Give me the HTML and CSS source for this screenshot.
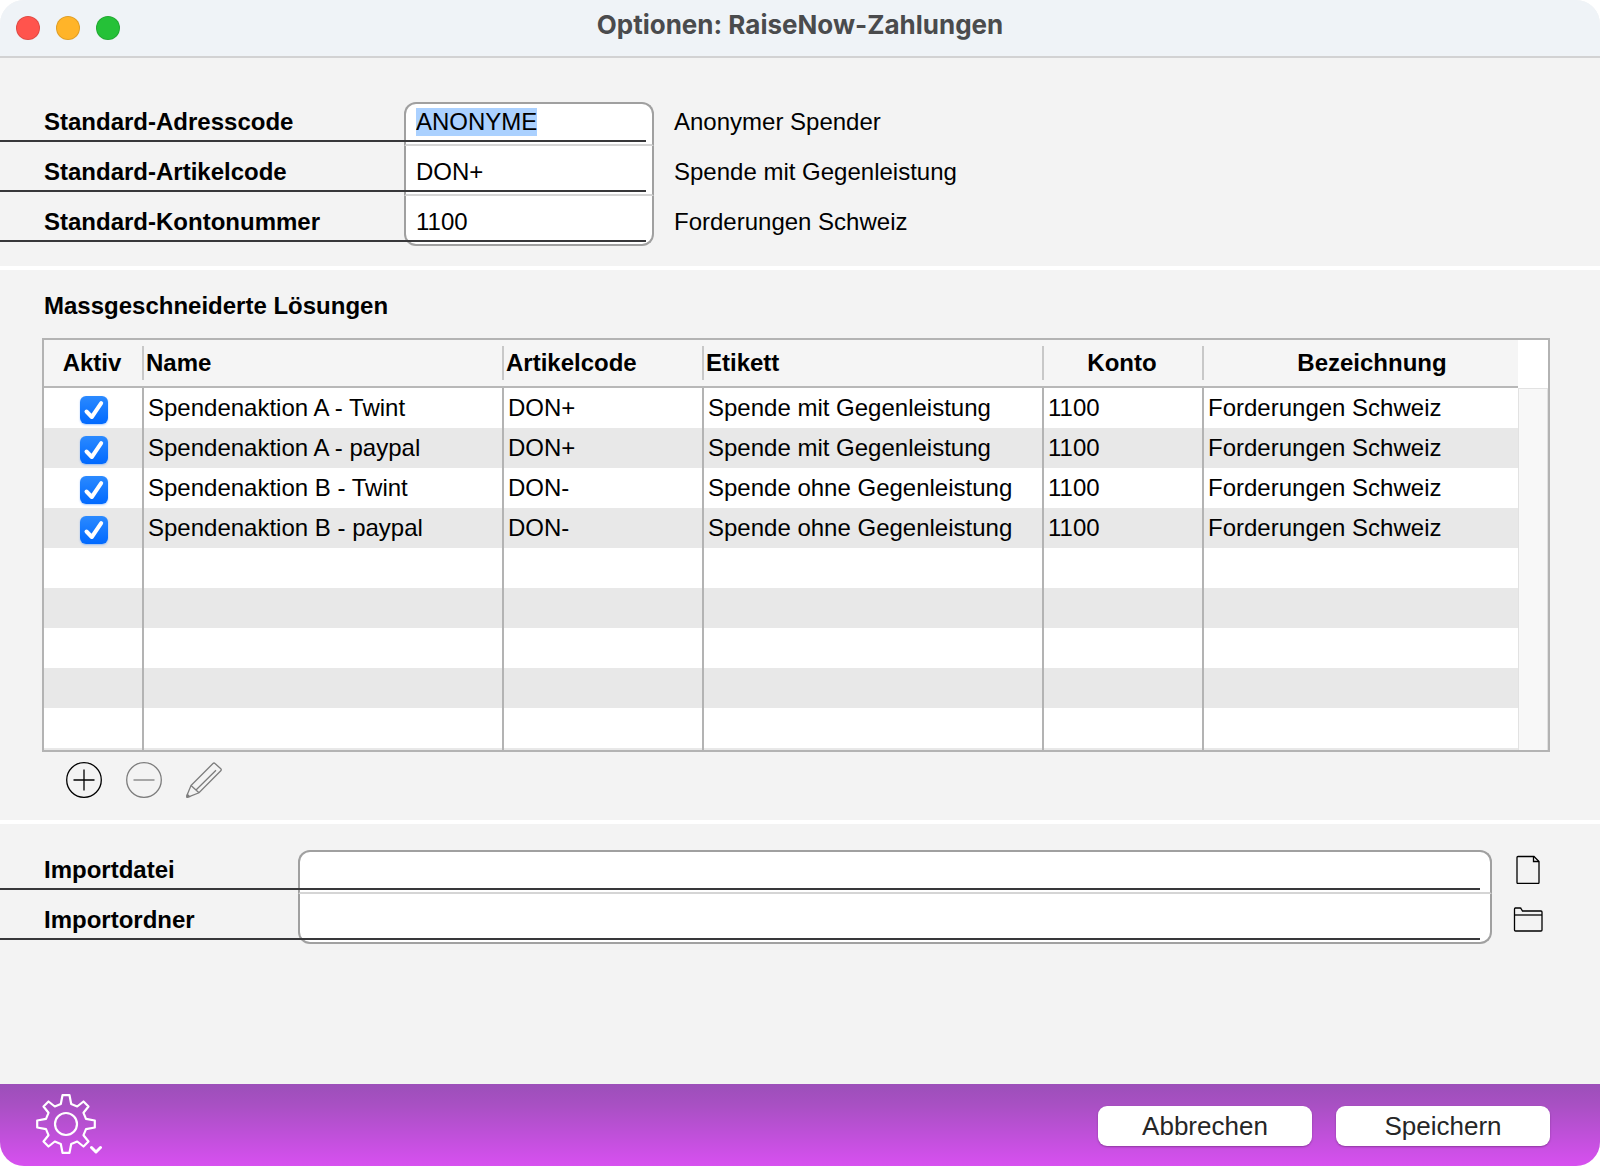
FILE: index.html
```html
<!DOCTYPE html>
<html lang="de">
<head>
  <meta charset="UTF-8">
  <title>Optionen: RaiseNow-Zahlungen</title>
  <link rel="stylesheet" href="styles.css">
</head>
<body>

  <div class="window">
    <header class="titlebar">
      <div class="lights">
        <button class="light close" aria-label="Schliessen"></button>
        <button class="light minimize" aria-label="Minimieren"></button>
        <button class="light maximize" aria-label="Maximieren"></button>
      </div>
      <h1>Optionen: RaiseNow-Zahlungen</h1>
    </header>

    <section class="defaults">
      <div class="row">
        <div class="field">
          <label for="adresscode">Standard-Adresscode</label>
          <input class="first" type="text" id="adresscode" value="ANONYME">
        </div>
        <span class="info">Anonymer Spender</span>
      </div>
      <div class="row">
        <div class="field">
          <label for="artikelcode">Standard-Artikelcode</label>
          <input type="text" id="artikelcode" value="DON+">
        </div>
        <span class="info">Spende mit Gegenleistung</span>
      </div>
      <div class="row">
        <div class="field">
          <label for="kontonummer">Standard-Kontonummer</label>
          <input class="last" type="text" id="kontonummer" value="1100">
        </div>
        <span class="info">Forderungen Schweiz</span>
      </div>
    </section>

    <section class="solutions">
      <h2>Massgeschneiderte Lösungen</h2>

      <div class="list">
        <table>
          <colgroup>
            <col class="col-active">
            <col class="col-name">
            <col class="col-article">
            <col class="col-label">
            <col class="col-account">
            <col>
          </colgroup>
          <thead>
            <tr>
              <th class="center">Aktiv</th>
              <th>Name</th>
              <th>Artikelcode</th>
              <th>Etikett</th>
              <th class="center">Konto</th>
              <th class="center">Bezeichnung</th>
            </tr>
          </thead>
          <tbody>
            <tr>
              <td class="active"><input type="checkbox" aria-label="Spendenaktion A - Twint aktiv" checked></td>
              <td>Spendenaktion A - Twint</td>
              <td>DON+</td>
              <td>Spende mit Gegenleistung</td>
              <td>1100</td>
              <td>Forderungen Schweiz</td>
            </tr>
            <tr>
              <td class="active"><input type="checkbox" aria-label="Spendenaktion A - paypal aktiv" checked></td>
              <td>Spendenaktion A - paypal</td>
              <td>DON+</td>
              <td>Spende mit Gegenleistung</td>
              <td>1100</td>
              <td>Forderungen Schweiz</td>
            </tr>
            <tr>
              <td class="active"><input type="checkbox" aria-label="Spendenaktion B - Twint aktiv" checked></td>
              <td>Spendenaktion B - Twint</td>
              <td>DON-</td>
              <td>Spende ohne Gegenleistung</td>
              <td>1100</td>
              <td>Forderungen Schweiz</td>
            </tr>
            <tr>
              <td class="active"><input type="checkbox" aria-label="Spendenaktion B - paypal aktiv" checked></td>
              <td>Spendenaktion B - paypal</td>
              <td>DON-</td>
              <td>Spende ohne Gegenleistung</td>
              <td>1100</td>
              <td>Forderungen Schweiz</td>
            </tr>
            <tr><td></td><td></td><td></td><td></td><td></td><td></td></tr>
            <tr><td></td><td></td><td></td><td></td><td></td><td></td></tr>
            <tr><td></td><td></td><td></td><td></td><td></td><td></td></tr>
            <tr><td></td><td></td><td></td><td></td><td></td><td></td></tr>
            <tr><td></td><td></td><td></td><td></td><td></td><td></td></tr>
            <tr class="cut"><td></td><td></td><td></td><td></td><td></td><td></td></tr>
          </tbody>
        </table>
        <div class="scrollbar"></div>
      </div>

      <div class="tools">
        <button class="icon-btn" aria-label="Hinzufügen">
          <svg width="36" height="36" viewBox="0 0 36 36">
            <circle cx="18" cy="18" r="17.3"/>
            <path d="M7.5 18h21M18 7.5v21"/>
          </svg>
        </button>
        <button class="icon-btn dim" aria-label="Entfernen">
          <svg width="36" height="36" viewBox="0 0 36 36">
            <circle cx="18" cy="18" r="17.3"/>
            <path d="M7.5 18h21"/>
          </svg>
        </button>
        <button class="icon-btn dim" aria-label="Bearbeiten">
          <svg width="36" height="36" viewBox="0 0 36 36">
            <path d="M5 23.5L27 1.5Q28 .5 29 1.5L34.8 6.7Q35.8 7.7 34.8 8.7L13 30.8L2 35.2Q.5 35.5.8 33.8Z"/>
            <path d="M5 23.5L13 30.8M10 28L30 8.3"/>
            <path d="M1.500 32.500L3.500 34.500L1 35Z" fill="currentColor"/>
          </svg>
        </button>
      </div>
    </section>

    <section class="import">
      <div class="row">
        <div class="field">
          <label for="importdatei">Importdatei</label>
          <input class="first" type="text" id="importdatei">
        </div>
        <button class="icon-btn" aria-label="Datei wählen">
          <svg width="30" height="30" viewBox="0 0 30 30">
            <path d="M5 2.500H21L26 7.500V28.500Q26 29.500 25 29.500H5Q4 29.500 4 28.500V3.500Q4 2.500 5 2.500Z"/>
            <path d="M20.500 2.500V7.500H26"/>
          </svg>
        </button>
      </div>
      <div class="row">
        <div class="field">
          <label for="importordner">Importordner</label>
          <input class="last" type="text" id="importordner">
        </div>
        <button class="icon-btn" aria-label="Ordner wählen">
          <svg width="30" height="30" viewBox="0 0 30 30">
            <path d="M2 4H7Q8 4 8.300 5L9.500 7H28Q29 7 29 8V26Q29 27 28 27H2.500Q1.500 27 1.500 26V5Q1.500 4 2.500 4Z"/>
            <path d="M1.500 11H29"/>
          </svg>
        </button>
      </div>
    </section>

    <footer class="footer">
      <button class="gear" aria-label="Einstellungen">
        <svg width="68" height="60" viewBox="0 0 68 60">
          <path d="M26.500 1.200H33.500L35.200 10L41.200 12.500L47.500 7.500L52.500 12.500L47.500 18.800L50 24.800L58.800 26.500V33.500L50 35.200L47.500 41.200L52.500 47.500L47.500 52.500L41.200 47.500L35.200 50L33.500 58.800H26.500L24.800 50L18.800 47.500L12.500 52.500L7.500 47.500L12.500 41.200L10 35.200L1.200 33.500V26.500L10 24.800L12.500 18.800L7.500 12.500L12.500 7.500L18.800 12.500L24.800 10Z"/>
          <circle cx="30" cy="30" r="11"/>
          <path class="chevron" d="M55.500 53.500L60 58L64.500 53.500"/>
        </svg>
      </button>
      <button class="btn">Abbrechen</button>
      <button class="btn">Speichern</button>
    </footer>
  </div>

  <script>
    const adresscode = document.getElementById('adresscode');
    adresscode.focus();
    adresscode.select();
  </script>

</body>
</html>
```
FILE: styles.css
```css
:root {
  --bg-color: #f3f3f3;
  --line-color: #b3b3b3;
  --field-border: #a0a0a0;
  --underline: #38383a;
}

* {
  box-sizing: border-box;
}

body {
  margin: 0;
  background: #fff;
  color: #000;
  font-family: "Liberation Sans", Arial, sans-serif;
  font-size: 24px;
  line-height: 28px;
}

button {
  padding: 0;
  border: 0;
  background: none;
  color: #000;
  font: inherit;
  cursor: pointer;
}

svg {
  display: block;
  fill: none;
  stroke: currentColor;
}

.window {
  display: flex;
  flex-direction: column;
  min-height: 100vh;
  background: var(--bg-color);
  border-radius: 24px;
  overflow: hidden;
}

/* title bar */
.titlebar {
  display: grid;
  grid-template-columns: 1fr auto 1fr;
  align-items: start;
  height: 58px;
  padding: 0 16px;
  background: #eff3f7;
  border-bottom: 2px solid #d2d2d3;
}

.lights {
  display: flex;
  gap: 16px;
  padding-top: 16px;
}

.light {
  width: 24px;
  height: 24px;
  border-radius: 50%;
  border: 1px solid rgba(0, 0, 0, 0.12);
}

.close { background: #ff544d; }
.minimize { background: #ffb429; }
.maximize { background: #25c138; }

.titlebar h1 {
  margin: 0;
  padding-top: 11px;
  font-family: Inter, sans-serif;
  font-size: 26px;
  font-weight: 700;
  color: #4a4b4d;
}

/* form rows */
.defaults {
  padding: 38px 0 20px;
  border-bottom: 4px solid #fff;
}

.import {
  padding: 20px 50px 20px 0;
}

.row {
  display: flex;
  height: 50px;
  align-items: flex-end;
}

.field {
  position: relative;
  display: flex;
  align-items: flex-end;
}

/* the rule runs from the window edge across the text box */
.field::after {
  content: "";
  position: absolute;
  left: 0;
  right: 8px;
  bottom: 4px;
  height: 2px;
  background: var(--underline);
  pointer-events: none;
}

.field label {
  width: 404px;
  padding: 0 0 10px 44px;
  font-weight: bold;
}

.field input {
  width: 250px;
  height: 50px;
  padding: 4px 10px 0;
  border: 2px solid var(--field-border);
  border-top: 0;
  border-bottom-color: #d5d5d5;
  background: #fff;
  font: inherit;
  color: #000;
  outline: none;
}

.field input.first {
  height: 44px;
  padding: 0 10px 4px;
  border-top: 2px solid var(--field-border);
  border-radius: 12px 12px 0 0;
}

.field input.last {
  border-bottom-color: var(--field-border);
  border-radius: 0 0 12px 12px;
}

.field input::selection {
  background: #abd1ff;
  color: #000;
}

.info {
  padding: 0 0 10px 20px;
}

.import .field {
  flex: 1;
}

.import .field::after {
  right: 12px;
}

.import .field label {
  width: 298px;
}

.import .field input {
  flex: 1;
}

.import .icon-btn {
  margin: 0 7px 10px 21px;
}

/* table */
.solutions {
  padding: 22px 50px 22px 42px;
  border-bottom: 4px solid #fff;
}

.solutions h2 {
  margin: 0 0 18px;
  padding-left: 2px;
  font-size: 24px;
}

.list {
  display: flex;
  border: 2px solid var(--line-color);
  background: #fff;
}

table {
  flex: 1;
  width: 100%;
  table-layout: fixed;
  border-collapse: separate;
  border-spacing: 0;
}

.col-active { width: 100px; }
.col-name { width: 360px; }
.col-article { width: 200px; }
.col-label { width: 340px; }
.col-account { width: 160px; }

th {
  height: 48px;
  padding: 0 2px;
  text-align: left;
  border-bottom: 2px solid #b8b8b8;
  background: linear-gradient(#c8c8c8, #c8c8c8) no-repeat right center / 2px 34px #f5f5f5;
}

th.center {
  padding-right: 6px;
  text-align: center;
}

th:last-child {
  padding-left: 28px;
  background: #f5f5f5;
}

td {
  height: 40px;
  padding: 0 4px;
  border-right: 2px solid var(--line-color);
  white-space: nowrap;
}

td:last-child {
  border-right: 0;
}

tbody tr:nth-child(even) {
  background: #e8e8e8;
}

.cut td {
  height: 2px;
}

td.active {
  padding: 4px 0 0 2px;
}

td input {
  appearance: none;
  display: block;
  width: 28px;
  height: 28px;
  margin: 0 auto;
  border: 1px solid #bbb;
  border-radius: 6px;
  background: #fff;
}

td input:checked {
  border: 0;
  background: url("data:image/svg+xml,%3Csvg xmlns='http://www.w3.org/2000/svg' viewBox='0 0 28 28'%3E%3Cpath d='M6.5 15.5L11.8 21L21.2 7.2' fill='none' stroke='white' stroke-width='4' stroke-linecap='round' stroke-linejoin='round'/%3E%3C/svg%3E"), linear-gradient(#2b8aff, #0069ff);
  box-shadow: 0 1px 2px rgba(0, 105, 255, 0.35);
}

.scrollbar {
  width: 30px;
  margin-top: 48px;
  background: #f8f8f8;
  border: 1px solid #e2e2e2;
  border-bottom: 0;
}

/* icons under the table */
.tools {
  display: flex;
  gap: 24px;
  padding: 10px 0 0 24px;
}

.icon-btn svg {
  stroke-width: 1.3;
}

.icon-btn.dim {
  color: #7d7d7d;
}

/* footer */
.footer {
  display: flex;
  align-items: flex-start;
  gap: 24px;
  height: 82px;
  margin-top: auto;
  padding: 10px 50px 0 36px;
  background: linear-gradient(#9c4fb9, #a850c3 25%, #d750f0);
}

.gear {
  margin-right: auto;
  color: #fff;
}

.gear svg {
  stroke-width: 2.2;
  stroke-linejoin: round;
  stroke-linecap: round;
}

.gear .chevron {
  stroke-width: 3;
}

.btn {
  width: 214px;
  height: 40px;
  margin-top: 12px;
  border-radius: 9px;
  background: #fff;
  box-shadow: 0 1px 2px rgba(0, 0, 0, 0.3);
  color: #262626;
  font-size: 26px;
}
```
